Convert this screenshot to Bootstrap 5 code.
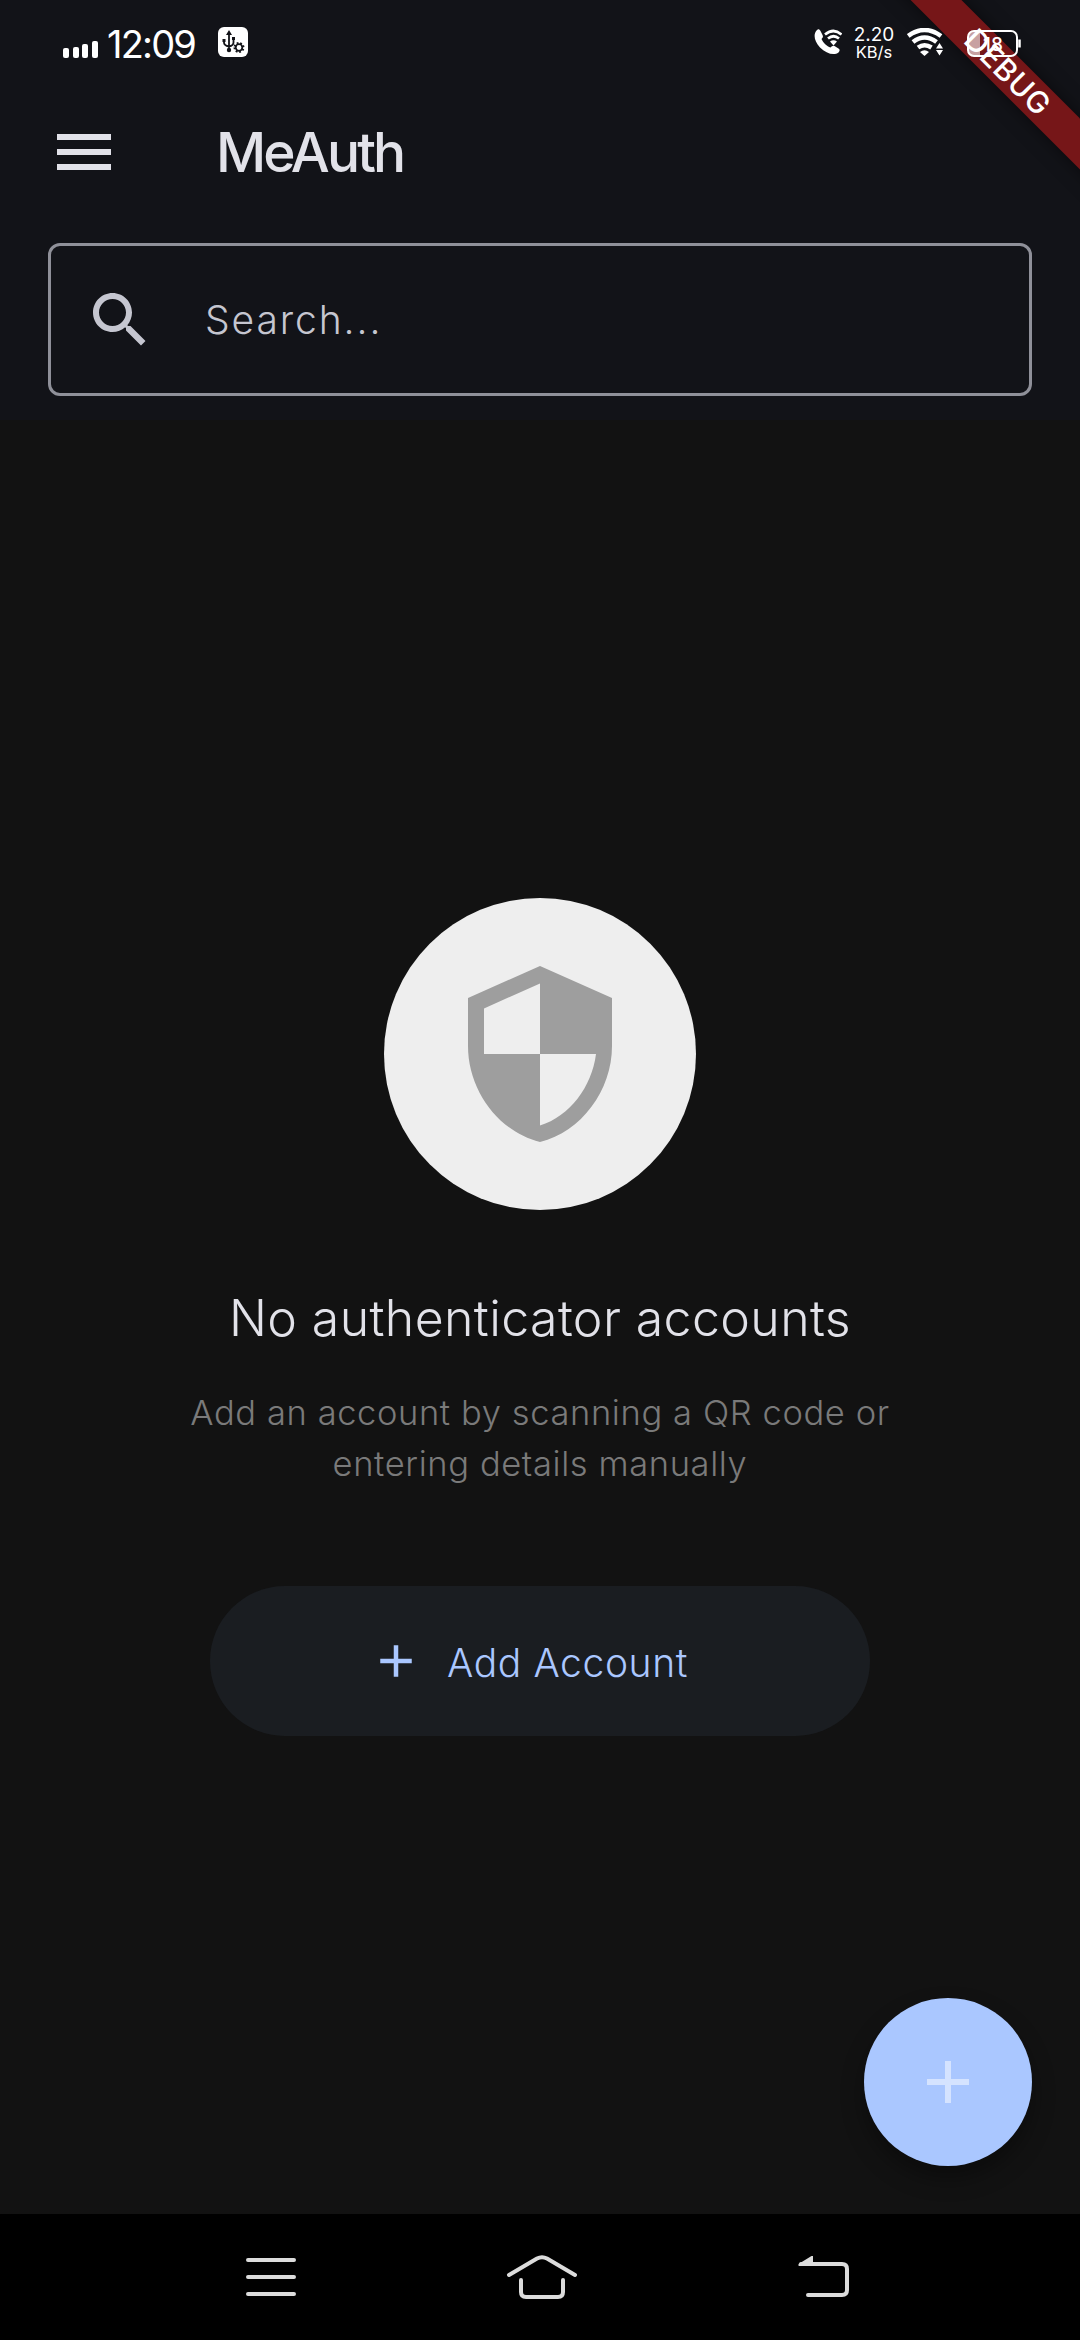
<!DOCTYPE html>
<html lang="en">
<head>
<meta charset="utf-8">
<meta name="viewport" content="width=device-width, initial-scale=1">
<title>MeAuth</title>
<link href="https://cdn.jsdelivr.net/npm/bootstrap@5.3.0/dist/css/bootstrap.min.css" rel="stylesheet">
<script src="https://cdn.jsdelivr.net/npm/bootstrap@5.3.0/dist/js/bootstrap.bundle.min.js" defer></script>
<style>
body{width:1080px;height:2340px;background:#121212;font-family:Inter,Roboto,sans-serif;color:#e2e2e9}
svg{display:block;flex:none}
.topbar{background:#121318;height:420px}
.statusbar{height:84px;padding:0 59px 0 63px;color:#fff;z-index:2}
.signal{margin-top:14px}
.clock{font-size:38px;line-height:40px;letter-spacing:-1.8px;margin:4px 0 0 8px;width:111px}
.netrate{width:42px;margin:2px 12px 0 11px}
.rate-num{font-size:19px;line-height:18px}
.rate-unit{font-size:16.500px;line-height:16px}
.battery{margin:3px 0 0 24px}
.appbar{height:136px;padding-left:57px}
.apptitle{font-size:55px;line-height:60px;font-weight:500;letter-spacing:-2.9px;margin-left:105px}
.searchbox{margin:23px 48px 0;height:153px;border:3px solid #8f9099;border-radius:12px;padding-left:33px;color:#c5c6d0}
.searchtext{font-size:39px;font-weight:300;letter-spacing:1.9px;margin-left:49px;line-height:48px;padding-top:1px}
.stage{height:1794px}
.emblem{width:312px;height:312px;background:#eee;margin-top:478px}
.headline{font-size:50px;line-height:60px;font-weight:300;letter-spacing:.4px;margin:78px 0 0}
.hint{font-size:34.5px;line-height:51px;font-weight:300;letter-spacing:.6px;color:#7a7a7a;margin:39px 0 0}
.addbtn{width:660px;height:150px;margin-top:97px;padding:0 0 0 159px;background:#1a1d21;color:#aac7ff;font-size:39px;font-weight:300;letter-spacing:.6px;border:0}
.addlabel{margin-left:24px;padding-top:4px}
.fabtn{right:48px;bottom:48px;width:168px;height:168px;background:#aac7ff;border:0;box-shadow:0 12px 22px rgba(0,0,0,.35)}
.navkeys{height:126px;background:#000;padding:0 230px 0 246px}
.homekey{margin-right:11px}
.corner{width:220px;height:220px;top:0;right:0}
.ribbon{width:400px;height:36px;left:-52px;top:54px;transform:rotate(45deg);background:#761618;color:#fff;font-size:30px;line-height:36px;font-weight:500;letter-spacing:.7px;box-shadow:0 0 18px rgba(0,0,0,.5)}
</style>
</head>
<body class="m-0 overflow-hidden position-relative">
<header class="topbar">
  <div class="statusbar d-flex align-items-center position-relative">
    <svg class="signal" width="36" height="17" fill="#fff"><rect y="7" width="6" height="10" rx="2"/><rect x="10" y="6" width="6" height="11" rx="2"/><rect x="19" y="3" width="6" height="14" rx="2"/><rect x="29" width="6" height="17" rx="2"/></svg>
    <span class="clock">12:09</span>
    <svg width="30" height="30" viewBox="0 0 30 30"><rect width="30" height="30" rx="6" fill="#fff"/><g fill="none" stroke="#121318" stroke-width="1.8"><path d="M11 6v17M6 13v2.500q0 3 5 4M15.500 11v4.500q0 3-4.500 4"/><circle cx="21" cy="20.500" r="3.300"/><path stroke-width="2" stroke-dasharray="1.770 1.770" d="M16.500 20.500a4.500 4.500 0 1 0 9 0a4.500 4.500 0 1 0-9 0"/></g><path fill="#121318" d="M11 3l3 5H8zM4.500 12h3v3h-3zM14 10h3v3h-3z"/><circle cx="11" cy="23" r="2.200" fill="#121318"/></svg>
    <svg class="ms-auto" width="28" height="26" viewBox="0 0 28 26"><path fill="#fff" d="M3 1C-1 5 0 12 6 18.500C12 24.500 20 27 24.500 23.500C26 22 26 20.500 24.500 19.500L20.500 17C19 16.200 18 17 16.500 18.500C13 17.500 9 13.500 7.500 10C9 8.500 9.300 7.500 8.500 6L6.500 2C5.500 .3 4.300-.2 3 1z"/><g fill="none" stroke="#fff" stroke-width="2.700"><path d="M11 5.500Q19.500-1.500 27.500 5.500M14 9.500Q19.500 5 25 9.500"/></g><path fill="#fff" d="M16 12.500Q19.500 10 23 12.500L19.500 16.500z"/></svg>
    <div class="netrate text-center"><div class="rate-num">2.20</div><div class="rate-unit">KB/s</div></div>
    <svg width="36" height="28" viewBox="0 0 36 28"><g fill="none" stroke="#fff" stroke-width="4.500"><path d="M1.200 8Q17.500-4 34 8M6 14Q17.500 5 29.500 14M11 19.500Q17.500 15 24.500 19.500"/></g><path fill="#fff" d="M13 24Q17.500 20.500 22 24L17.500 28z"/><path fill="#121318" d="M27.500 28V17l5-4.500 4 4.500v11z"/><path fill="#fff" d="M32.500 15l3.500 5.500h-7zM29 22h7l-3.500 5.500z"/></svg>
    <svg class="battery" width="54" height="27" viewBox="0 0 54 27"><path fill="#fff" fill-opacity=".6" d="M2 4q0-2 3-2h8v23H5q-3 0-3-2z"/><rect x="1" y="1" width="49" height="25" rx="6" fill="none" stroke="#fff" stroke-width="2"/><path d="M52.500 9.500v8" stroke="#fff" stroke-width="2.500"/><text x="16" y="20.500" font-size="19" font-weight="500" fill="#fff">18</text></svg>
  </div>
  <div class="appbar d-flex align-items-center">
    <svg width="54" height="36" fill="#e2e2e9"><path d="M0 0h54v6H0zM0 15h54v6H0zM0 30h54v6H0z"/></svg>
    <span class="apptitle">MeAuth</span>
  </div>
  <div class="searchbox d-flex align-items-center">
    <svg width="72" height="72" viewBox="0 0 24 24" fill="#c5c6d0"><path d="M15.500 14h-.79l-.28-.27C15.410 12.590 16 11.110 16 9.500 16 5.910 13.090 3 9.500 3S3 5.910 3 9.500 5.910 16 9.500 16c1.610 0 3.090-.59 4.230-1.570l.27.28v.79l5 4.990L20.490 19l-4.990-5zm-6 0C7.010 14 5 11.990 5 9.500S7.010 5 9.500 5 14 7.010 14 9.500 11.990 14 9.500 14z"/></svg>
    <span class="searchtext">Search...</span>
  </div>
</header>
<main class="stage d-flex flex-column align-items-center position-relative text-center">
  <div class="emblem rounded-circle d-flex align-items-center justify-content-center">
    <svg width="192" height="192" viewBox="0 0 24 24" fill="#9e9e9e"><path d="M12 1L3 5v6c0 5.550 3.840 10.740 9 12 5.160-1.260 9-6.450 9-12V5l-9-4zm0 10.990h7c-.53 4.120-3.280 7.790-7 8.940V12H5V6.300l7-3.110v8.800z"/></svg>
  </div>
  <h1 class="headline">No authenticator accounts</h1>
  <p class="hint">Add an account by scanning a QR code or<br>entering details manually</p>
  <button class="addbtn btn rounded-pill d-flex align-items-center">
    <svg width="54" height="54" viewBox="0 0 24 24" fill="#aac7ff"><path d="M19 13h-6v6h-2v-6H5v-2h6V5h2v6h6v2z"/></svg>
    <span class="addlabel">Add Account</span>
  </button>
  <button class="fabtn btn rounded-circle position-absolute d-flex align-items-center justify-content-center p-0">
    <svg width="42" height="42" fill="#d5e3ff"><path d="M18 0h6v18h18v6H24v18h-6V24H0v-6h18z"/></svg>
  </button>
</main>
<footer class="navkeys d-flex align-items-center justify-content-between position-relative">
  <svg width="50" height="38" fill="none" stroke="#dcdcdc" stroke-width="4" stroke-linecap="round"><path d="M2 2h46M2 19h46M2 36h46"/></svg>
  <svg class="homekey" width="72" height="44" viewBox="0 0 72 44" fill="none" stroke="#dcdcdc" stroke-width="4" stroke-linecap="round"><path d="M3 20L31 3.500Q36 .8 41 3.500L69 20M15 25v12q0 5 5 5h32q5 0 5-5V25"/></svg>
  <svg width="52" height="42" viewBox="0 0 52 42" fill="none" stroke="#dcdcdc" stroke-width="4" stroke-linecap="round"><path d="M3 8h41q5 0 5 5v21q0 5-5 5H10"/><path fill="#dcdcdc" stroke="none" d="M.5 9.800V8L13.500 0h1.500v10H1z"/></svg>
</footer>
<div class="corner position-absolute overflow-hidden"><div class="ribbon position-absolute text-center">DEBUG</div></div>
</body>
</html>
